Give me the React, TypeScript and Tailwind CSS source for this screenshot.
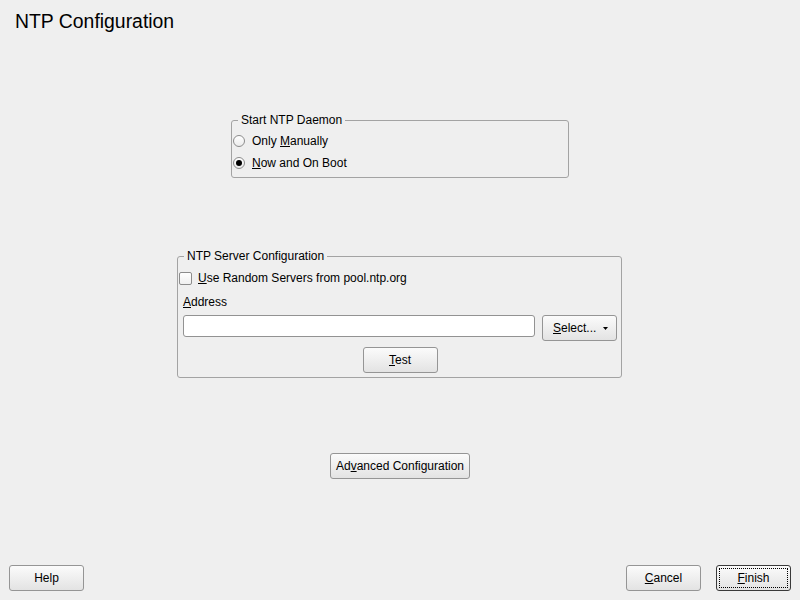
import { ReactNode } from "react"

const font = "font-['Liberation_Sans',Arial,sans-serif]"

export default function App() {
    return <div className={`w-[800px] h-[600px] bg-[#efefef] text-black flex flex-col ${font}`}>
        <h1 className="pl-[15px] pt-[10px] text-[19.4px] leading-[22px] font-normal">NTP Configuration</h1>

        <fieldset className="mt-[81px] ml-[231px] w-[338px] border border-[#a3a3a3] rounded-[3px] pb-[3px] text-[12px] leading-[14px]">
            <legend className="ml-[6px] px-[3px]">Start NTP Daemon</legend>
            <div className="pt-[3px]">
                <Radio label={<>Only <u>M</u>anually</>} />
                <Radio checked label={<><u>N</u>ow and On Boot</>} />
            </div>
        </fieldset>

        <fieldset className="mt-[71px] ml-[177px] w-[445px] border border-[#a3a3a3] rounded-[3px] pb-[4px] text-[12px] leading-[14px]">
            <legend className="ml-[6px] px-[3px]">NTP Server Configuration</legend>
            <div className="pt-[4px] pr-[4px] pl-[5px] flex flex-col">
                <div className="h-[22px] flex items-center gap-[6px] -ml-[4px]">
                    <span className="size-[13px] border border-[#8c8c8c] rounded-[2px] bg-gradient-to-b from-[#ffffff] to-[#f0f0f0]" />
                    <span><u>U</u>se Random Servers from pool.ntp.org</span>
                </div>
                <div className="mt-[6px]"><u>A</u>ddress</div>
                <div className="mt-[6px] flex items-start gap-[7px]">
                    <input className="w-[352px] h-[22px] bg-white border border-[#929292] rounded-[3px] outline-none" />
                    <Button className="w-[75px] justify-between pl-[10px] pr-[8px]">
                        <span><u>S</u>elect...</span>
                        <svg width="5" height="3" viewBox="0 0 5 3"><path d="M0 0h5L2.5 3z" fill="#000" /></svg>
                    </Button>
                </div>
                <Button className="mt-[6px] mx-auto w-[75px] justify-center"><span><u>T</u>est</span></Button>
            </div>
        </fieldset>

        <Button className="mt-[75px] ml-[330px] w-[140px] justify-center text-[12px]">
            <span>Ad<u>v</u>anced Configuration</span>
        </Button>

        <div className="mt-auto px-[9px] pb-[9px] flex items-center text-[12px]">
            <Button className="w-[75px] justify-center"><span>Help</span></Button>
            <div className="ml-auto flex gap-[15px]">
                <Button className="w-[75px] justify-center"><span><u>C</u>ancel</span></Button>
                <Button focused className="w-[75px] justify-center"><span><u>F</u>inish</span></Button>
            </div>
        </div>
    </div>
}

const Radio = ({ label, checked }: { label: ReactNode, checked?: boolean }) => {
    return <div className="h-[22px] flex items-center gap-[7px] pl-[1px]">
        <span className="size-[12px] rounded-full border border-[#8c8c8c] bg-gradient-to-b from-[#ffffff] to-[#ececec] flex items-center justify-center">
            {checked && <span className="size-[6px] rounded-full bg-black" />}
        </span>
        <span>{label}</span>
    </div>
}

const Button = ({ children, className, focused }: { children: ReactNode, className?: string, focused?: boolean }) => {
    return <div className={`h-[26px] flex items-center text-[12px] leading-[14px] rounded-[3px] border bg-gradient-to-b from-[#fbfbfb] to-[#e3e3e3] ${focused ? "border-[#3a3a3a] p-[2px]" : "border-[#959595]"} ${className ?? ""}`}>
        {
            focused
                ? <div className="flex-1 h-full flex items-center justify-center border border-dotted border-black">{children}</div>
                : children
        }
    </div>
}
